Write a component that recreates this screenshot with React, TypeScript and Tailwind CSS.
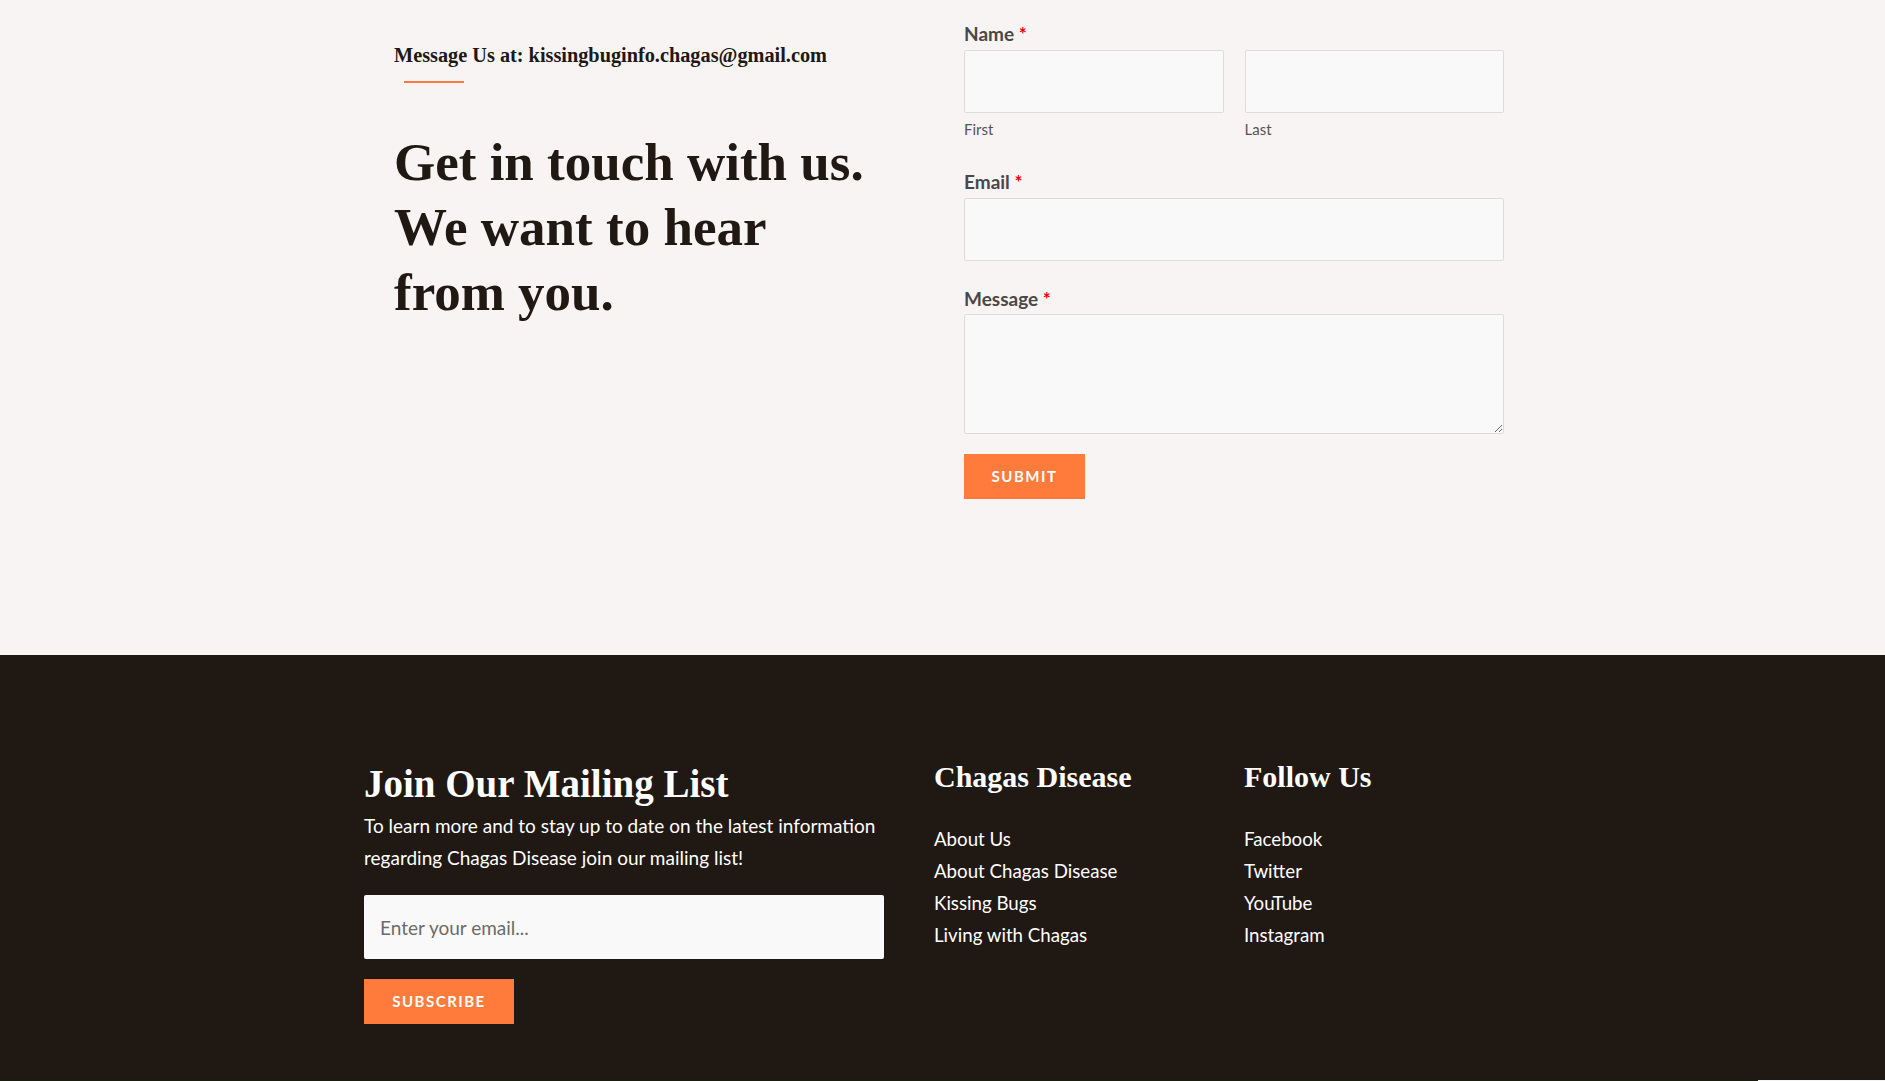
import React from "react";

const serif = "font-['Liberation_Serif',serif]";
const sans = "font-['Lato',sans-serif]";

const chagasLinks = ["About Us", "About Chagas Disease", "Kissing Bugs", "Living with Chagas"];
const followLinks = ["Facebook", "Twitter", "YouTube", "Instagram"];

const Label = ({ text }: { text: string }) => (
  <label className={`block text-[19px] font-bold leading-[24px] text-[#4b4747] ${sans}`}>
    {text} <span className="text-[#e00]">*</span>
  </label>
);

const inputCls =
  "block w-full rounded-[2px] border border-[#dcdcdc] bg-[#f9f9f9] outline-none";

const App = () => {
  return (
    <div className="w-full bg-[#f8f4f3]">
      {/* contact section */}
      <section className="flex h-[655px] pl-[394px]">
        <div className="w-[570px] pt-[41px]">
          <p className={`text-[20.3px] font-bold leading-[28px] text-[#201813] ${serif}`}>
            Message Us at: kissingbuginfo.chagas@gmail.com
          </p>
          <div className="ml-[10px] mt-[12px] h-[2px] w-[60px] bg-[#ff7b3b]" />
          <h2 className={`mt-[47px] text-[53px] font-bold leading-[65px] text-[#201813] ${serif}`}>
            Get in touch with us.
            <br />
            We want to hear
            <br />
            from you.
          </h2>
        </div>

        <form className="w-[540px] pt-[22px]" onSubmit={(e) => e.preventDefault()}>
          <Label text="Name" />
          <div className="mt-[4px] flex gap-[21px]">
            <div className="flex-1">
              <input className={`${inputCls} h-[63px]`} />
              <p className={`mt-[6px] text-[15px] leading-[20px] text-[#555] ${sans}`}>First</p>
            </div>
            <div className="flex-1">
              <input className={`${inputCls} h-[63px]`} />
              <p className={`mt-[6px] text-[15px] leading-[20px] text-[#555] ${sans}`}>Last</p>
            </div>
          </div>

          <div className="mt-[31px]">
            <Label text="Email" />
            <input className={`${inputCls} mt-[4px] h-[63px]`} />
          </div>

          <div className="mt-[26px]">
            <Label text="Message" />
            <textarea className={`${inputCls} mt-[3px] h-[120px]`} />
          </div>

          <button
            type="submit"
            className={`mt-[20px] h-[45px] w-[121px] bg-[#ff7b3b] text-[15px] font-bold tracking-[1.5px] text-white ${sans}`}
          >
            SUBMIT
          </button>
        </form>
      </section>

      {/* footer */}
      <footer className="flex h-[425px] bg-[#201813] pl-[364px] text-white">
        <div className="w-[570px] pt-[106px]">
          <h3 className={`text-[39px] font-bold leading-[46px] ${serif}`}>Join Our Mailing List</h3>
          <p className={`mt-[3px] w-[520px] text-[19px] leading-[32px] ${sans}`}>
            To learn more and to stay up to date on the latest information regarding Chagas Disease join our mailing
            list!
          </p>
          <input
            placeholder="Enter your email..."
            className={`mt-[21px] block h-[64px] w-[520px] rounded-[2px] bg-[#f9f9f9] px-[16px] text-[19px] text-[#333] outline-none placeholder:text-[#6b6b6b] ${sans}`}
          />
          <button
            className={`mt-[20px] h-[45px] w-[150px] bg-[#ff7b3b] text-[15px] font-bold tracking-[1.5px] text-white ${sans}`}
          >
            SUBSCRIBE
          </button>
        </div>

        <div className="w-[310px] pt-[104px]">
          <h3 className={`text-[30px] font-bold leading-[36px] ${serif}`}>Chagas Disease</h3>
          <ul className={`mt-[28px] text-[18.7px] leading-[32px] ${sans}`}>
            {chagasLinks.map((l) => (
              <li key={l}>{l}</li>
            ))}
          </ul>
        </div>

        <div className="pt-[104px]">
          <h3 className={`text-[30px] font-bold leading-[36px] ${serif}`}>Follow Us</h3>
          <ul className={`mt-[28px] text-[18.7px] leading-[32px] ${sans}`}>
            {followLinks.map((l) => (
              <li key={l}>{l}</li>
            ))}
          </ul>
        </div>
      </footer>

      <div className="flex h-px">
        <div className="w-[1758px] bg-[#1a1c10]" />
        <div className="flex-1 bg-[#f4f4f4]" />
      </div>
    </div>
  );
};

export default App;
